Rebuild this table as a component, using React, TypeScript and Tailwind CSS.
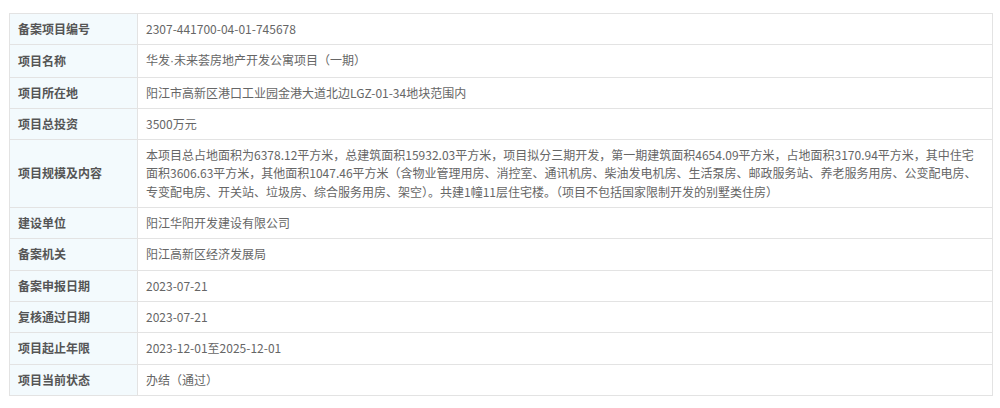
import React from "react";

type Row = { label: string; value: React.ReactNode };

const rows: Row[] = [
  { label: "备案项目编号", value: "2307-441700-04-01-745678" },
  {
    label: "项目名称",
    value: (
      <>
        华发<span style={{ fontFamily: '"Liberation Sans", sans-serif' }}>·</span>未来荟房地产开发公寓项目（一期）
      </>
    ),
  },
  { label: "项目所在地", value: "阳江市高新区港口工业园金港大道北边LGZ-01-34地块范围内" },
  { label: "项目总投资", value: "3500万元" },
  {
    label: "项目规模及内容",
    value: (
      <>
        本项目总占地面积为6378.12平方米，总建筑面积15932.03平方米，项目拟分三期开发，第一期建筑面积4654.09平方米，占地面积3170.94平方米，其中住宅
        <br />
        面积3606.63平方米，其他面积1047.46平方米（含物业管理用房、消控室、通讯机房、柴油发电机房、生活泵房、邮政服务站、养老服务用房、公变配电房、
        <br />
        专变配电房、开关站、垃圾房、综合服务用房、架空）。共建1幢11层住宅楼。（项目不包括国家限制开发的别墅类住房）
      </>
    ),
  },
  { label: "建设单位", value: "阳江华阳开发建设有限公司" },
  { label: "备案机关", value: "阳江高新区经济发展局" },
  { label: "备案申报日期", value: "2023-07-21" },
  { label: "复核通过日期", value: "2023-07-21" },
  { label: "项目起止年限", value: "2023-12-01至2025-12-01" },
  { label: "项目当前状态", value: "办结（通过）" },
];

export default function App() {
  return (
    <div
      className="min-h-[408px] bg-white pt-[13px] pl-[9px] pr-[7px]"
      style={{ fontFamily: '"Noto Sans CJK SC", "Noto Sans", sans-serif' }}
    >
      <div className="border border-[#e3e3e3] text-[12px] leading-[18.3px]">
        {rows.map((row, i) => (
          <div
            key={i}
            className={
              i === rows.length - 1
                ? "flex"
                : "flex border-b border-[#e3e3e3]"
            }
          >
            <div className="flex w-[128px] shrink-0 items-center border-r border-[#e3e3e3] bg-[#f3fafd] py-[6px] pl-[8px] font-bold text-[#555]">
              {row.label}
            </div>
            <div className="flex-1 py-[6px] pl-[8px] pr-[6px] text-[#666]">
              {row.value}
            </div>
          </div>
        ))}
      </div>
    </div>
  );
}
